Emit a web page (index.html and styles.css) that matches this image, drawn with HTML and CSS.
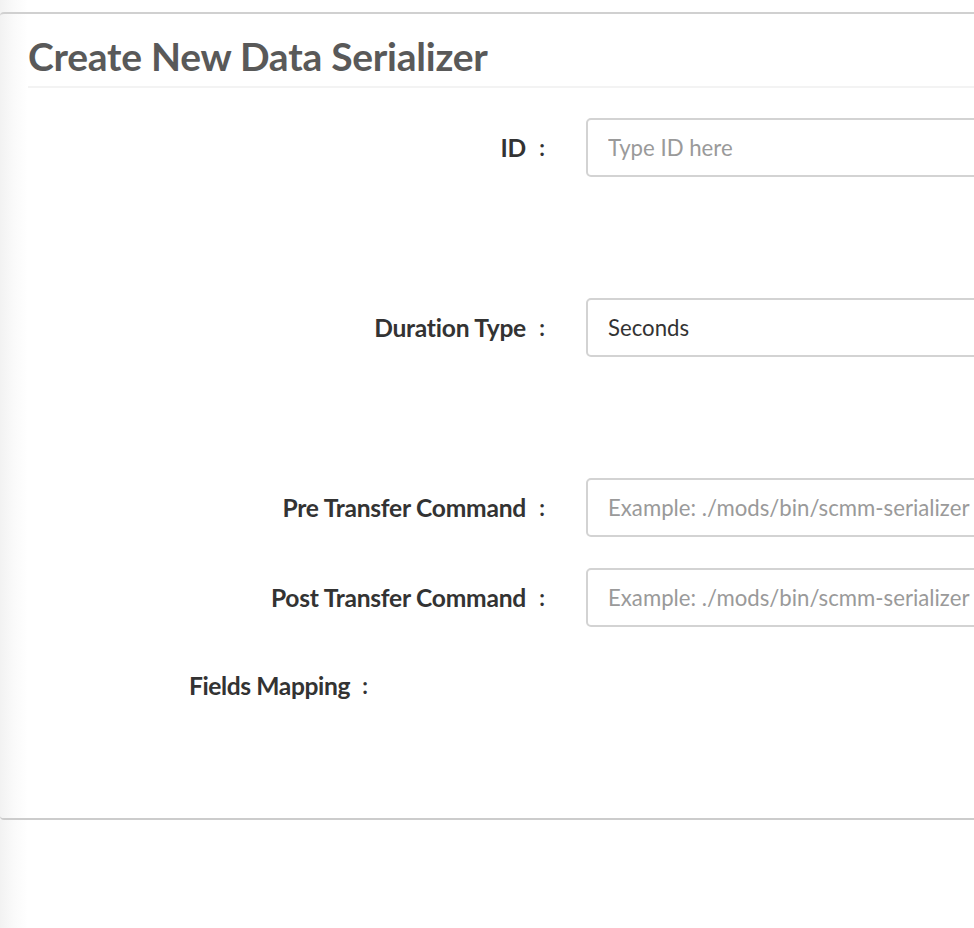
FILE: index.html
```html
<!DOCTYPE html>
<html>
<head>
<meta charset="utf-8">
<link rel="stylesheet" href="styles.css">
</head>
<body>
<div class="page">
  <div class="card">
    <div class="card-header">
      <h1 class="title">Create New Data Serializer</h1>
    </div>
    <div class="form">
      <div class="row row-tall">
        <label class="label">ID</label><span class="colon">:</span>
        <input class="input" type="text" placeholder="Type ID here">
      </div>
      <div class="row row-tall">
        <label class="label">Duration Type</label><span class="colon">:</span>
        <div class="input select">Seconds</div>
      </div>
      <div class="row row-short">
        <label class="label">Pre Transfer Command</label><span class="colon">:</span>
        <input class="input" type="text" placeholder="Example: ./mods/bin/scmm-serializer">
      </div>
      <div class="row row-short">
        <label class="label">Post Transfer Command</label><span class="colon">:</span>
        <input class="input" type="text" placeholder="Example: ./mods/bin/scmm-serializer">
      </div>
      <div class="row row-mapping">
        <label class="label label-narrow">Fields Mapping</label><span class="colon">:</span>
      </div>
    </div>
  </div>
</div>
</body>
</html>
```

FILE: styles.css
```css
html, body {
  margin: 0;
  padding: 0;
  overflow: hidden;
}
body {
  width: 974px;
  height: 928px;
  background: linear-gradient(to right, #f2f2f2 0px, #fafafa 14px, #ffffff 28px);
  font-family: Lato, "Open Sans", sans-serif;
}
.page {
  padding-top: 12px;
}
.card {
  border-top: 2px solid #d0d0d0;
  border-bottom: 2px solid #cccccc;
  border-radius: 4px 0 0 4px;
  width: 1200px;
  height: 808px;
  box-sizing: border-box;
}
.card-header {
  margin-left: 28px;
  border-bottom: 2px solid #f3f3f3;
  height: 74px;
  box-sizing: border-box;
}
.title {
  margin: 0;
  padding-top: 20px;
  font-size: 39px;
  line-height: 44px;
  font-weight: 700;
  color: #595959;
  letter-spacing: -0.25px;
}
.form {
  padding-top: 29px;
}
.row {
  display: flex;
  align-items: center;
  height: 60px;
}
.row-tall { margin-bottom: 120px; }
.row-short { margin-bottom: 30px; }
.label {
  width: 526px;
  text-align: right;
  font-size: 24.6px;
  font-weight: 700;
  color: #333333;
  letter-spacing: -0.25px;
}
.label-narrow {
  width: 350px;
  letter-spacing: -0.4px;
}
.colon {
  width: 32px;
  text-align: center;
  font-size: 22px;
  font-weight: 700;
  color: #333333;
}
.label-narrow + .colon {
  width: 30px;
}
.row-mapping {
  height: 56px;
}
.input {
  margin-left: 28px;
  width: 500px;
  height: 59px;
  box-sizing: border-box;
  border: 2px solid #d3d3d3;
  border-radius: 5px;
  padding: 0 20px;
  font-family: Lato, "Open Sans", sans-serif;
  font-size: 22.2px;
  color: #333333;
  background: #ffffff;
  outline: none;
}
.input::placeholder {
  color: #9a9a9a;
}
.select {
  display: flex;
  align-items: center;
}
```
